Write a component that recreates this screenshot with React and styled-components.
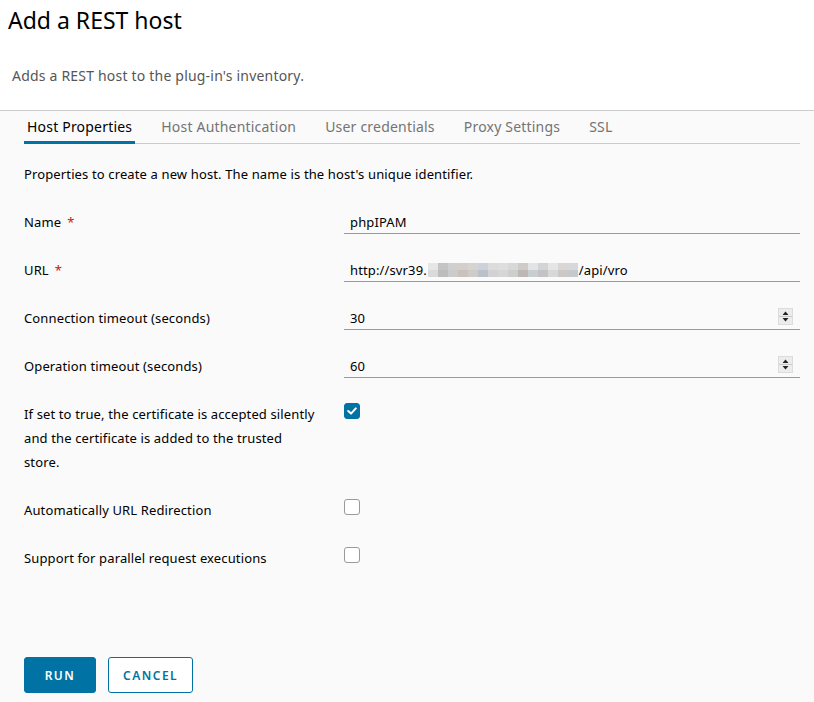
import React from "react";
import styled, { createGlobalStyle } from "styled-components";

const Global = createGlobalStyle`
  html, body { margin: 0; padding: 0; background: #fafafa; }
  body { font-family: "Noto Sans", "DejaVu Sans", sans-serif; color: #000; }
  * { box-sizing: border-box; }
`;

const Page = styled.div`
  width: 814px;
  height: 702px;
  display: flex;
  flex-direction: column;
  background: #fafafa;
  overflow: hidden;
`;

const Header = styled.header`
  background: #fff;
  height: 111px;
  padding: 6px 8px 0;
  display: flex;
  flex-direction: column;
  border-bottom: 1px solid #ccc;
`;

const Title = styled.h1`
  margin: 0;
  font-size: 23px;
  font-weight: 400;
  line-height: 28px;
  color: #000;
`;

const Subtitle = styled.p`
  margin: 32px 0 0 4px;
  font-size: 14px;
  line-height: 20px;
  letter-spacing: 0.2px;
  color: #565656;
`;

const TabBar = styled.nav`
  display: flex;
  gap: 23px;
  height: 33px;
  margin: 0 14px 0 24px;
  border-bottom: 1px solid #ccc;
`;

const Tab = styled.div`
  padding: 0 3px 2px;
  display: flex;
  align-items: center;
  font-size: 14px;
  letter-spacing: 0.2px;
  color: ${(p) => (p.$active ? "#000" : "#747474")};
  box-shadow: ${(p) => (p.$active ? "inset 0 -3px 0 #0072a3" : "none")};
  margin-bottom: -1px;
`;

const Body = styled.section`
  padding: 6px 14px 0 24px;
  display: flex;
  flex-direction: column;
  flex: 1;
  letter-spacing: 0.13px;
`;

const Intro = styled.div`
  height: 48px;
  display: flex;
  align-items: center;
  font-size: 13px;
  color: #000;
`;

const Row = styled.div`
  display: grid;
  grid-template-columns: 320px 1fr;
  align-items: ${(p) => (p.$top ? "start" : "center")};
  min-height: 48px;
  padding: ${(p) => (p.$top ? "12px 0" : "0")};
`;

const Label = styled.label`
  font-size: 13px;
  line-height: 24px;
  color: #000;
  padding-right: 24px;
`;

const Req = styled.span`
  color: #c92100;
  margin-left: 6px;
`;

const Input = styled.div`
  height: 24px;
  border-bottom: 1px solid #9a9a9a;
  display: flex;
  align-items: center;
  padding: 0 6px;
  font-size: 13px;
  color: #000;
`;

const Value = styled.span`
  flex: 1;
  display: flex;
  align-items: center;
`;

const Pixels = styled.span`
  display: inline-grid;
  grid-template-columns: repeat(15, 10px);
  grid-auto-rows: 7px;
  margin: 1px 1px 0;
`;

const Px = styled.span`
  display: block;
`;

const Spinner = styled.span`
  width: 15px;
  height: 17px;
  border: 1px solid #dcdcdc;
  display: flex;
  flex-direction: column;
  align-items: center;
  justify-content: space-around;
  margin-right: 1px;
  margin-top: -2px;
  background-image: linear-gradient(#ececec 0 7px, #c9c9c9 7px 8px, #ececec 8px);
`;

const Check = styled.span`
  width: 16px;
  height: 16px;
  border-radius: 3px;
  margin-top: ${(p) => (p.$top ? "1px" : "-6px")};
  display: flex;
  align-items: center;
  justify-content: center;
  background: ${(p) => (p.$checked ? "#0072a3" : "#fff")};
  border: 1px solid ${(p) => (p.$checked ? "#0072a3" : "#9a9a9a")};
`;

const Actions = styled.div`
  display: flex;
  gap: 12px;
  margin-top: auto;
  margin-bottom: 9px;
`;

const Button = styled.button`
  height: 36px;
  padding: 0 14px;
  min-width: 72px;
  border-radius: 3px;
  font-family: "Noto Sans", sans-serif;
  font-size: 12px;
  font-weight: 600;
  letter-spacing: 1.5px;
  border: 1px solid #0072a3;
  background: ${(p) => (p.$primary ? "#0072a3" : "#fff")};
  color: ${(p) => (p.$primary ? "#fff" : "#0072a3")};
`;

const blur = [
  "#e6e6e6","#c4c4c4","#cfcfcf","#d3cfcc","#d6d3d1","#cdd1da","#dcdcdc","#dedede","#d8d8d8","#cfcbc8","#e2e4e6","#d4d4d4","#e5e5e5","#dad6d4","#d8d8dc",
  "#dadada","#bdbdbd","#cbcbcb","#c8c2bf","#cfcbc8","#bbc0ca","#d2d2d2","#d6d6d6","#cecece","#bdb8b5","#c8cdcf","#c3c3c3","#d8d8d8","#ccc8c5","#c6c8cc",
];

const Arrow = ({ up }) => (
  <svg width="7" height="4" viewBox="0 0 7 4">
    <path d={up ? "M0.5 4 L3.5 0.5 L6.5 4 Z" : "M0.5 0 L6.5 0 L3.5 3.5 Z"} fill="#222" />
  </svg>
);

const Tick = () => (
  <svg width="10" height="8" viewBox="0 0 10 8">
    <path d="M1.2 4 L4 6.6 L8.8 1.4" stroke="#fff" strokeWidth="2" fill="none" strokeLinecap="round" strokeLinejoin="round" />
  </svg>
);

export default function App() {
  return (
    <Page>
      <Global />
      <Header>
        <Title>Add a REST host</Title>
        <Subtitle>Adds a REST host to the plug-in's inventory.</Subtitle>
      </Header>
      <TabBar>
        <Tab $active>Host Properties</Tab>
        <Tab>Host Authentication</Tab>
        <Tab>User credentials</Tab>
        <Tab>Proxy Settings</Tab>
        <Tab>SSL</Tab>
      </TabBar>
      <Body>
        <Intro>Properties to create a new host. The name is the host's unique identifier.</Intro>
        <Row>
          <Label>Name<Req>*</Req></Label>
          <Input><Value>phpIPAM</Value></Input>
        </Row>
        <Row>
          <Label>URL<Req>*</Req></Label>
          <Input>
            <Value>
              http://svr39.
              <Pixels>
                {blur.map((c, i) => (
                  <Px key={i} style={{ background: c }} />
                ))}
              </Pixels>
              /api/vro
            </Value>
          </Input>
        </Row>
        <Row>
          <Label>Connection timeout (seconds)</Label>
          <Input>
            <Value>30</Value>
            <Spinner><Arrow up /><Arrow /></Spinner>
          </Input>
        </Row>
        <Row>
          <Label>Operation timeout (seconds)</Label>
          <Input>
            <Value>60</Value>
            <Spinner><Arrow up /><Arrow /></Spinner>
          </Input>
        </Row>
        <Row $top>
          <Label>If set to true, the certificate is accepted silently and the certificate is added to the trusted store.</Label>
          <Check $checked $top><Tick /></Check>
        </Row>
        <Row>
          <Label>Automatically URL Redirection</Label>
          <Check />
        </Row>
        <Row>
          <Label>Support for parallel request executions</Label>
          <Check />
        </Row>
        <Actions>
          <Button $primary>RUN</Button>
          <Button>CANCEL</Button>
        </Actions>
      </Body>
    </Page>
  );
}
